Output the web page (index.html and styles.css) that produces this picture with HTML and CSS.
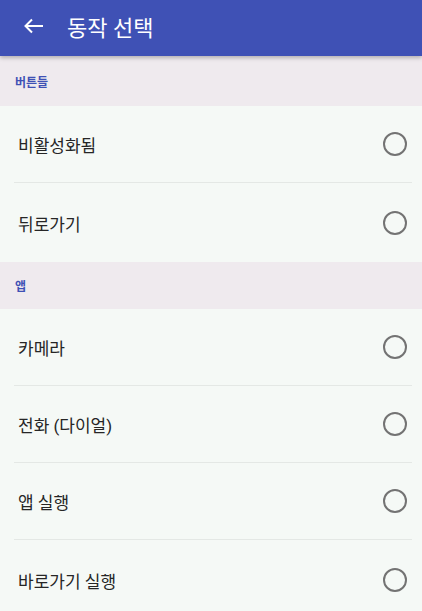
FILE: index.html
```html
<!DOCTYPE html>
<html lang="ko">

<head>
    <meta charset="UTF-8">
    <meta name="viewport" content="width=device-width, initial-scale=1.0" />
    <title>동작 선택</title>
    <link rel="stylesheet" href="styles.css">
</head>

<body>
    <header class="toolbar">
        <svg class="back" width="24" height="24" viewBox="0 0 24 24">
            <path d="M4.5 12H22M11 5.5L4.5 12L11 18.5" fill="none" stroke="#fff" stroke-width="2" />
        </svg>
        <h1>동작 선택</h1>
    </header>

    <section class="group first">
        <h2>버튼들</h2>
    </section>
    <ul class="list">
        <li><span>비활성화됨</span><i class="radio"></i></li>
        <li><span>뒤로가기</span><i class="radio"></i></li>
    </ul>

    <section class="group">
        <h2>앱</h2>
    </section>
    <ul class="list">
        <li><span>카메라</span><i class="radio"></i></li>
        <li><span>전화 (다이얼)</span><i class="radio"></i></li>
        <li><span>앱 실행</span><i class="radio"></i></li>
        <li><span>바로가기 실행</span><i class="radio"></i></li>
    </ul>
</body>

</html>
```

FILE: styles.css
```css
* {
    margin: 0;
    padding: 0;
    box-sizing: border-box;
}

html {
    background-color: #F5F9F6;
    font-family: Roboto, 'Noto Sans CJK KR', sans-serif;
}

body {
    width: 422px;
    height: 611px;
    overflow: hidden;
}

.toolbar {
    height: 56px;
    background-color: #3F51B5;
    display: flex;
    align-items: center;
    padding-left: 21px;
    box-shadow: 0 2px 4px rgba(0, 0, 0, 0.25);
    position: relative;
    z-index: 1;
}

.toolbar h1 {
    font-size: 22px;
    font-weight: 400;
    color: #FFFFFF;
    margin-left: 22px;
    margin-top: -5px;
}

.back {
    margin-top: -5px;
}

.group {
    height: 47px;
    background-color: #EFEAEE;
    display: flex;
    align-items: center;
    padding-left: 15px;
}

.group.first {
    height: 50px;
}

.group h2 {
    font-size: 12px;
    font-weight: 700;
    color: #3F51B5;
}

.list {
    list-style: none;
}

.list li {
    height: 77px;
    display: flex;
    align-items: center;
    justify-content: space-between;
    padding: 0 5px 0 4px;
    margin: 0 10px 0 14px;
    border-bottom: 1px solid #E4E8E5;
}

.list li:last-child {
    height: 79px;
    border-bottom: none;
}

.list li span {
    font-size: 17px;
    color: #262626;
    margin-top: 1px;
}

.radio {
    width: 24px;
    height: 24px;
    border: 2px solid #737373;
    border-radius: 50%;
}
```
